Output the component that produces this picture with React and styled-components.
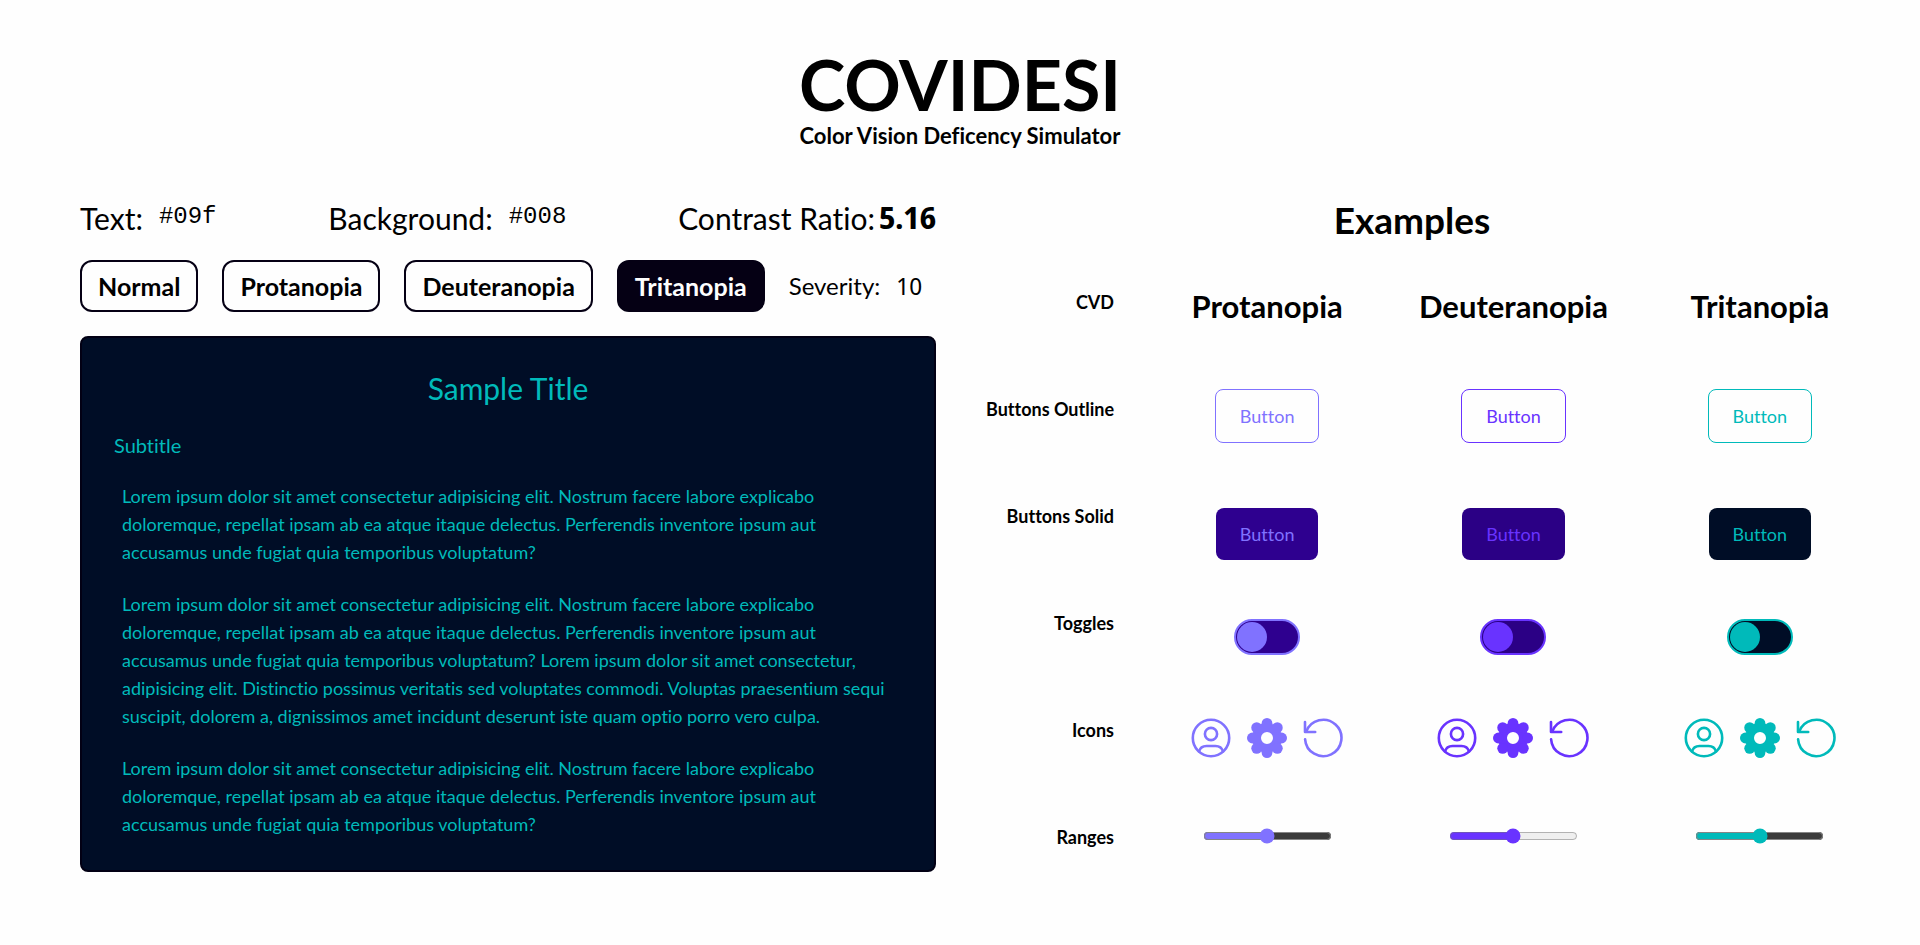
import React, { useState } from "react";
import styled, { createGlobalStyle } from "styled-components";

const GlobalStyle = createGlobalStyle`
  *, *::before, *::after { box-sizing: border-box; }
  body {
    margin: 0;
    background: #fefefe;
    color: #000;
    font-family: Lato, sans-serif;
    font-size: 18px;
    line-height: 28px;
    font-variant-ligatures: none;
  }
  h1, h2, h3, h4, p, ul { margin: 0; padding: 0; }
`;

const numberFont = '"Noto Sans Display", "Noto Sans", sans-serif';

const Page = styled.div`
  padding: 44px 80px 48px;
`;

const Header = styled.header`
  text-align: center;
  font-weight: 700;
`;

const Logo = styled.h1`
  font-size: 70px;
  line-height: 80px;
  font-weight: 700;
`;

const Tagline = styled.p`
  font-size: 22px;
  line-height: 24px;
`;

const Main = styled.main`
  display: grid;
  grid-template-columns: minmax(0, 1fr) minmax(0, 1fr);
  gap: 48px;
  margin-top: 48px;
`;

const Simulator = styled.section`
  display: flex;
  flex-direction: column;
  gap: 24px;
`;

const Settings = styled.div`
  display: flex;
  justify-content: space-between;
  height: 40px;
  font-size: 30px;
  line-height: 44px;
`;

const Field = styled.label`
  display: flex;
  align-items: ${(p) => (p.$top ? "flex-start" : "center")};
  gap: 16px;
`;

const ColorInput = styled.input`
  width: 100px;
  height: 40px;
  padding: 0;
  border: 0;
  background: none;
  color: inherit;
  font: 24px "Liberation Mono", monospace;
`;

const Ratio = styled.p`
  display: flex;
  gap: 4px;
`;

const RatioValue = styled.strong`
  font-family: ${numberFont};
`;

const Modes = styled.div`
  display: flex;
  align-items: center;
  gap: 24px;
  font-size: 24px;
`;

const ModeButton = styled.button`
  height: 52px;
  padding: 0 16px;
  border: 2px solid #050014;
  border-radius: 12px;
  background: ${(p) => (p.$active ? "#050014" : "transparent")};
  color: ${(p) => (p.$active ? "#fefefe" : "#000")};
  font: inherit;
  font-size: 25px;
  font-weight: 700;
`;

const SeverityInput = styled.input`
  width: 40px;
  padding: 0;
  border: 0;
  background: none;
  color: inherit;
  font: inherit;
  font-family: ${numberFont};
`;

const Sample = styled.article`
  padding: 30px 32px 32px;
  border: 2px solid #020014;
  border-radius: 8px;
  background: #000d26;
  color: #00baba;
`;

const SampleTitle = styled.h2`
  font-size: 30px;
  line-height: 40px;
  font-weight: 400;
  text-align: center;
`;

const SampleSubtitle = styled.h3`
  margin-top: 24px;
  font-size: 20px;
  line-height: 26px;
  font-weight: 400;
`;

const SampleText = styled.p`
  margin: 24px 0 0 8px;
`;

const Examples = styled.section`
  display: flex;
  flex-direction: column;
`;

const ExamplesTitle = styled.h2`
  font-size: 37px;
  line-height: 48px;
  font-weight: 700;
  text-align: center;
`;

const Board = styled.div`
  display: grid;
  grid-template-columns: 160px repeat(3, minmax(0, 1fr));
  margin: 35px -43px 0 0;
`;

const RowLabels = styled.ul`
  display: flex;
  flex-direction: column;
  gap: 79px;
  padding: 9px 30px 0 0;
  list-style: none;
  font-weight: 700;
  text-align: right;
  white-space: nowrap;
`;

const Column = styled.div`
  display: flex;
  flex-direction: column;
  gap: 48px;
`;

const ColumnTitle = styled.h3`
  font-size: 31px;
  line-height: 54px;
  font-weight: 700;
  text-align: center;
`;

const slotHeights = { button: 70, toggle: 40, icons: 66, range: 34 };

const Slot = styled.div`
  display: flex;
  align-items: center;
  justify-content: center;
  gap: 16px;
  height: ${(p) => slotHeights[p.$kind]}px;
`;

const DemoButton = styled.button`
  padding: 12px 24px;
  border: ${(p) => (p.$solid ? "0" : `1px solid ${p.$tone.fg}`)};
  border-radius: 8px;
  background: ${(p) => (p.$solid ? p.$tone.bg : "transparent")};
  color: ${(p) => p.$tone.fg};
  font: inherit;
`;

const Toggle = styled.input`
  appearance: none;
  width: 66px;
  height: 36px;
  margin: 0;
  padding: 1px;
  border: 2px solid ${(p) => p.$tone.fg};
  border-radius: 18px;
  background: ${(p) => p.$tone.bg};

  &::before {
    content: "";
    display: block;
    width: 30px;
    height: 30px;
    border-radius: 50%;
    background: ${(p) => p.$tone.fg};
  }
  &:checked::before { margin-left: auto; }
`;

const Range = styled.input`
  accent-color: ${(p) => p.$tone.fg};
  color-scheme: ${(p) => p.$tone.track};
`;

const Icon = styled.svg`
  width: 40px;
  height: 40px;
  fill: none;
  stroke: ${(p) => p.$tone.fg};
  stroke-width: 2.6;
  stroke-linecap: round;
  stroke-linejoin: round;
`;

const GearBody = styled.circle`
  stroke-width: 9;
`;

const Petal = styled.circle`
  fill: ${(p) => p.$tone.fg};
  stroke: none;
`;

const tones = [
  { name: "Protanopia", fg: "#8072ff", bg: "#2e008f", track: "dark" },
  { name: "Deuteranopia", fg: "#6933ff", bg: "#2b0085", track: "light" },
  { name: "Tritanopia", fg: "#00baba", bg: "#000d26", track: "light" },
];

const petals = Array.from({ length: 8 }, (_, i) => ({
  x: 20 + 14.6 * Math.cos((i * Math.PI) / 4),
  y: 20 + 14.6 * Math.sin((i * Math.PI) / 4),
}));

const labels = ["CVD", "Buttons Outline", "Buttons Solid", "Toggles", "Icons", "Ranges"];
const modes = ["Normal", "Protanopia", "Deuteranopia", "Tritanopia"];

const shortText =
  "Lorem ipsum dolor sit amet consectetur adipisicing elit. Nostrum facere labore explicabo doloremque, repellat ipsam ab ea atque itaque delectus. Perferendis inventore ipsum aut accusamus unde fugiat quia temporibus voluptatum?";
const longText =
  shortText +
  " Lorem ipsum dolor sit amet consectetur, adipisicing elit. Distinctio possimus veritatis sed voluptates commodi. Voluptas praesentium sequi suscipit, dolorem a, dignissimos amet incidunt deserunt iste quam optio porro vero culpa.";

function UserIcon({ tone }) {
  return (
    <Icon $tone={tone} viewBox="0 0 40 40" aria-hidden="true">
      <circle cx="20" cy="20" r="18.2" />
      <circle cx="20" cy="16" r="6.1" />
      <path d="M8 33.5C9 30 12 28 15.5 28h9C28 28 31 30 32 33.5" />
    </Icon>
  );
}

function GearIcon({ tone }) {
  return (
    <Icon $tone={tone} viewBox="0 0 40 40" aria-hidden="true">
      <GearBody cx="20" cy="20" r="10.5" />
      {petals.map((p, i) => (
        <Petal key={i} $tone={tone} cx={p.x} cy={p.y} r="5.4" />
      ))}
    </Icon>
  );
}

function ResetIcon({ tone }) {
  return (
    <Icon $tone={tone} viewBox="0 0 40 40" aria-hidden="true">
      <path d="M2.1 21.3A18.2 18.2 0 1 0 3.2 13.6" />
      <path d="M2 4v10h10.2" />
    </Icon>
  );
}

function ExampleColumn({ tone }) {
  return (
    <Column>
      <ColumnTitle>{tone.name}</ColumnTitle>
      <Slot $kind="button"><DemoButton $tone={tone}>Button</DemoButton></Slot>
      <Slot $kind="button"><DemoButton $tone={tone} $solid>Button</DemoButton></Slot>
      <Slot $kind="toggle">
        <Toggle $tone={tone} type="checkbox" role="switch" aria-label={`${tone.name} toggle`} />
      </Slot>
      <Slot $kind="icons">
        <UserIcon tone={tone} />
        <GearIcon tone={tone} />
        <ResetIcon tone={tone} />
      </Slot>
      <Slot $kind="range">
        <Range $tone={tone} type="range" defaultValue="50" aria-label={`${tone.name} range`} />
      </Slot>
    </Column>
  );
}

export default function App() {
  const [mode, setMode] = useState("Tritanopia");
  return (
    <>
      <GlobalStyle />
      <Page>
        <Header>
          <Logo>COVIDESI</Logo>
          <Tagline>Color Vision Deficency Simulator</Tagline>
        </Header>
        <Main>
          <Simulator>
            <Settings>
              <Field $top>Text:<ColorInput type="text" defaultValue="#09f" /></Field>
              <Field $top>Background:<ColorInput type="text" defaultValue="#008" /></Field>
              <Ratio>Contrast Ratio:<RatioValue>5.16</RatioValue></Ratio>
            </Settings>
            <Modes>
              {modes.map((m) => (
                <ModeButton key={m} $active={m === mode} onClick={() => setMode(m)}>{m}</ModeButton>
              ))}
              <Field>Severity:<SeverityInput type="text" defaultValue="10" /></Field>
            </Modes>
            <Sample>
              <SampleTitle>Sample Title</SampleTitle>
              <SampleSubtitle>Subtitle</SampleSubtitle>
              <SampleText>{shortText}</SampleText>
              <SampleText>{longText}</SampleText>
              <SampleText>{shortText}</SampleText>
            </Sample>
          </Simulator>
          <Examples>
            <ExamplesTitle>Examples</ExamplesTitle>
            <Board>
              <RowLabels>{labels.map((l) => <li key={l}>{l}</li>)}</RowLabels>
              {tones.map((t) => <ExampleColumn key={t.name} tone={t} />)}
            </Board>
          </Examples>
        </Main>
      </Page>
    </>
  );
}
